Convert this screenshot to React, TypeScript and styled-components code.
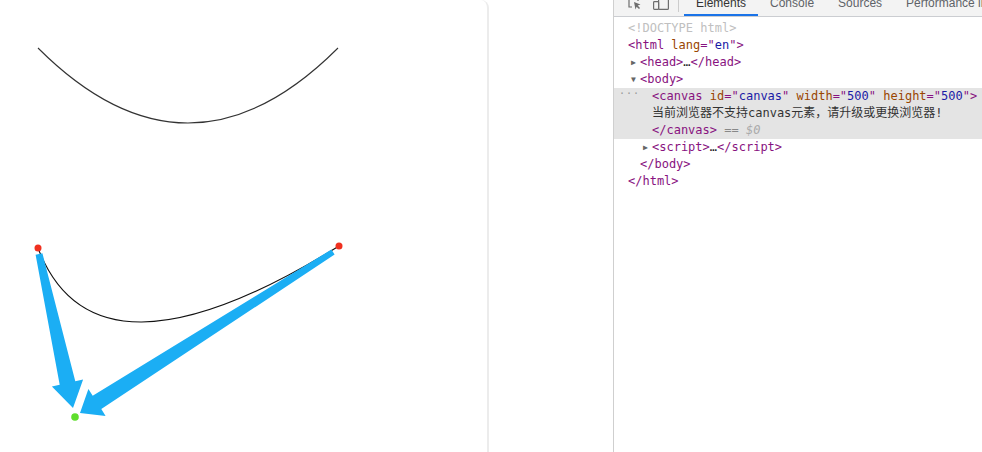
import styled, { createGlobalStyle } from 'styled-components';

const Global = createGlobalStyle`
  html, body {
    margin: 0;
    padding: 0;
    background: #ffffff;
  }
  body {
    font-family: "Liberation Sans", Arial, sans-serif;
  }
`

const Page = styled.div`
  display: flex;
  width: 982px;
  height: 452px;
  overflow: hidden;
  background: #fff;
`

const CanvasPane = styled.div`
  width: 487px;
  flex: none;
  border-right: 2px solid #ececec;
  border-top-right-radius: 8px;
  box-sizing: content-box;
  svg {
    display: block;
  }
`

const Gap = styled.div`
  width: 124px;
  flex: none;
`

const DevTools = styled.div`
  flex: 1;
  min-width: 0;
  border-left: 1px solid #cfcfcf;
  display: flex;
  flex-direction: column;
  overflow: hidden;
`

const Toolbar = styled.div`
  height: 16px;
  flex: none;
  display: flex;
  align-items: flex-start;
  background: #f3f3f3;
  border-bottom: 1px solid #cbcdd1;
  overflow: hidden;
  white-space: nowrap;
`

const IconButton = styled.div<{ $first?: boolean }>`
  width: 26px;
  height: 16px;
  flex: none;
  display: flex;
  justify-content: center;
  margin-left: ${p => (p.$first ? 8 : 0)}px;
  svg {
    margin-top: -3px;
  }
`

const Divider = styled.div`
  width: 1px;
  height: 12px;
  background: #cccccc;
  margin: 0 5px 0 4px;
  flex: none;
`

const Tab = styled.div<{ $active?: boolean }>`
  height: 16px;
  padding: 0 12px;
  flex: none;
  box-sizing: border-box;
  border-bottom: 2px solid ${p => (p.$active ? '#1a73e8' : 'transparent')};
  color: ${p => (p.$active ? '#333333' : '#5f6368')};
  font-size: 12px;
  line-height: 16px;
  span {
    display: block;
    margin-top: -5px;
  }
`

const Tree = styled.div`
  padding-top: 3px;
  font-family: "DejaVu Sans Mono", "Noto Sans CJK SC", monospace;
  font-size: 12px;
  line-height: 17px;
  color: #222;
  white-space: nowrap;
`

const Row = styled.div<{ $depth: number }>`
  position: relative;
  height: 17px;
  padding-left: ${p => 14 + p.$depth * 12}px;
`

const Selected = styled.div`
  background: #e4e4e4;
`

const Dots = styled.span`
  position: absolute;
  left: 5px;
  top: -3px;
  color: #999;
  font-size: 10px;
  letter-spacing: 1px;
`

const Arrow = styled.span`
  display: inline-block;
  width: 9px;
  margin-left: -9px;
  color: #666;
  font-size: 8px;
  vertical-align: 1px;
`

const Tag = styled.span`
  color: #881280;
`

const Attr = styled.span`
  color: #994500;
`

const Val = styled.span`
  color: #1a1aa6;
`

const Doctype = styled.span`
  color: #c0c0c0;
`

const Muted = styled.span`
  color: #888;
  i {
    color: #aaa;
  }
`

const Cjk = styled.span`
  font-family: "DejaVu Sans Mono", "Noto Sans CJK SC", monospace;
  color: #333;
`

function Sketch() {
  const blue = '#1baef4';
  return (
    <svg width="487" height="452" viewBox="0 0 487 452">
      <path d="M38 48 Q188 198 338 48" fill="none" stroke="#333" strokeWidth="1.1" />
      <path d="M38 248 Q95 397 339 246" fill="none" stroke="#111" strokeWidth="1.1" />
      <polygon
        fill={blue}
        points="35.6,254.8 59.7,384.7 51.9,386.5 73,408 83.1,379.5 75.3,381.3 42.4,253.2"
      />
      <polygon
        fill={blue}
        points="331.4,249.5 92.7,395.7 88.4,388.9 80,413 105.6,415.9 101.3,409.1 334.6,254.5"
      />
      <circle cx="38" cy="248" r="3.5" fill="#f0301f" />
      <circle cx="339" cy="246" r="3.5" fill="#f0301f" />
      <circle cx="75" cy="417" r="3.8" fill="#5fde2c" />
    </svg>
  );
}

function InspectIcon() {
  return (
    <svg width="14" height="14" viewBox="0 0 14 14" fill="none">
      <path d="M1 1 V10 H4" stroke="#6e6e6e" strokeWidth="1.2" />
      <path d="M1 1 H10 V4" stroke="#6e6e6e" strokeWidth="1.2" />
      <path d="M6 5 L12.5 7.5 L9.7 8.6 L12 11 L11 12 L8.6 9.7 L7.5 12.5 Z" fill="#6e6e6e" />
    </svg>
  );
}

function DeviceIcon() {
  return (
    <svg width="17" height="14" viewBox="0 0 17 14" fill="none">
      <rect x="5.6" y="1.6" width="9.8" height="10.8" rx="1" stroke="#6e6e6e" strokeWidth="1.2" />
      <rect x="0.6" y="4.6" width="5" height="7.8" rx="0.8" stroke="#6e6e6e" strokeWidth="1.2" />
    </svg>
  );
}

export default function App() {
  return (
    <Page>
      <Global />
      <CanvasPane>
        <Sketch />
      </CanvasPane>
      <Gap />
      <DevTools>
        <Toolbar>
          <IconButton $first>
            <InspectIcon />
          </IconButton>
          <IconButton>
            <DeviceIcon />
          </IconButton>
          <Divider />
          <Tab $active><span>Elements</span></Tab>
          <Tab><span>Console</span></Tab>
          <Tab><span>Sources</span></Tab>
          <Tab><span>Performance insights</span></Tab>
        </Toolbar>
        <Tree>
          <Row $depth={0}>
            <Doctype>&lt;!DOCTYPE html&gt;</Doctype>
          </Row>
          <Row $depth={0}>
            <Tag>&lt;html </Tag>
            <Attr>lang</Attr>
            <Tag>="</Tag>
            <Val>en</Val>
            <Tag>"&gt;</Tag>
          </Row>
          <Row $depth={1}>
            <Arrow>▶</Arrow>
            <Tag>&lt;head&gt;</Tag>…<Tag>&lt;/head&gt;</Tag>
          </Row>
          <Row $depth={1}>
            <Arrow>▼</Arrow>
            <Tag>&lt;body&gt;</Tag>
          </Row>
          <Selected>
            <Row $depth={2}>
              <Dots>···</Dots>
              <Tag>&lt;canvas </Tag>
              <Attr>id</Attr>
              <Tag>="</Tag>
              <Val>canvas</Val>
              <Tag>" </Tag>
              <Attr>width</Attr>
              <Tag>="</Tag>
              <Val>500</Val>
              <Tag>" </Tag>
              <Attr>height</Attr>
              <Tag>="</Tag>
              <Val>500</Val>
              <Tag>"&gt;</Tag>
            </Row>
            <Row $depth={2}>
              <Cjk>当前浏览器不支持canvas元素，请升级或更换浏览器!</Cjk>
            </Row>
            <Row $depth={2}>
              <Tag>&lt;/canvas&gt;</Tag>
              <Muted> == <i>$0</i></Muted>
            </Row>
          </Selected>
          <Row $depth={2}>
            <Arrow>▶</Arrow>
            <Tag>&lt;script&gt;</Tag>…<Tag>&lt;/script&gt;</Tag>
          </Row>
          <Row $depth={1}>
            <Tag>&lt;/body&gt;</Tag>
          </Row>
          <Row $depth={0}>
            <Tag>&lt;/html&gt;</Tag>
          </Row>
        </Tree>
      </DevTools>
    </Page>
  );
}
